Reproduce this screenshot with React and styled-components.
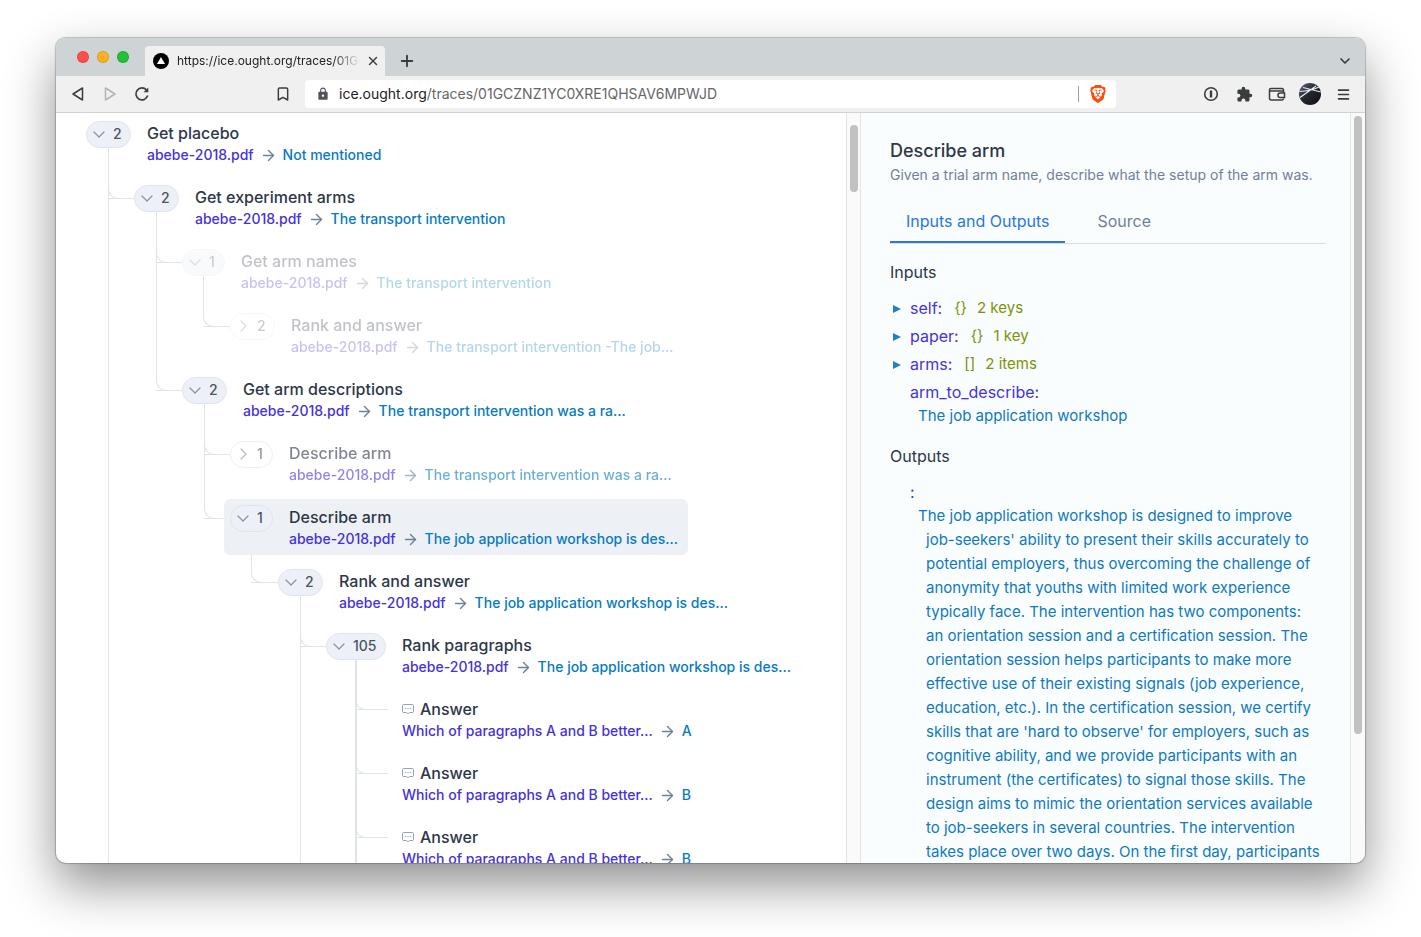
import React from "react";
import styled, { createGlobalStyle, css } from "styled-components";
import { ChevronDown, ArrowRight, X, Plus, Bookmark, Menu } from "lucide-react";
import { SiBrave } from "react-icons/si";
import { MdExtension, MdLock } from "react-icons/md";

const LINE = "#dde4ee";
const FONT = `Inter, "Liberation Sans", sans-serif`;

const GlobalStyle = createGlobalStyle`
  *, *::before, *::after { box-sizing: border-box; }
  body { margin: 0; background: #fff; color: #2d3748; font: 400 16px/24px ${FONT}; }
  button, input { font: inherit; color: inherit; }
  button { display: flex; align-items: center; justify-content: center; padding: 0; border: 0; background: none; cursor: pointer; }
  a { text-decoration: none; color: inherit; }
  ul, dl, dd, h1, h2, p { margin: 0; padding: 0; list-style: none; }
  svg { display: block; flex: none; }
`;

const Desktop = styled.div`
  display: flex;
  height: 100vh;
  padding: 38px 56px 74px;
`;
const Window = styled.div`
  display: flex;
  flex-direction: column;
  flex: 1;
  min-width: 0;
  overflow: hidden;
  border-radius: 10px;
  background: #fff;
  box-shadow: 0 0 1px 1px rgba(0, 0, 0, 0.22), 0 22px 50px rgba(0, 0, 0, 0.44);
`;

/* Browser chrome */
const TabStrip = styled.header`
  display: flex;
  align-items: center;
  height: 38px;
  flex: none;
  padding: 8px 12px 0 21px;
  background: #ced3d6;
`;
const Lights = styled.div`
  display: flex;
  gap: 8px;
  margin: 0 16px 8px 0;
`;
const Light = styled.span`
  width: 12px;
  height: 12px;
  border-radius: 50%;
  background: ${(p) => p.$color};
  border: 1px solid rgba(0, 0, 0, 0.12);
`;
const PageTab = styled.div`
  display: flex;
  align-items: center;
  width: 240px;
  height: 30px;
  padding: 0 5px 0 8px;
  border-radius: 4px 4px 0 0;
  background: #f0f0f0;
  font-size: 12px;
  color: #222;
`;
const PageTabTitle = styled.span`
  flex: 1;
  margin: 0 6px 0 8px;
  overflow: hidden;
  white-space: nowrap;
  mask-image: linear-gradient(to right, #000 85%, transparent);
`;
const ChromeButton = styled.button`
  width: ${(p) => p.$size || 24}px;
  height: ${(p) => p.$height || 24}px;
  color: ${(p) => p.$color || "#3a3d40"};
`;
const Spacer = styled.div`
  flex: 1;
`;
const Toolbar = styled.div`
  display: flex;
  align-items: center;
  height: 37px;
  flex: none;
  padding: 0 10px;
  background: #f0f0f0;
  border-bottom: 1px solid #ced3d6;
`;
const NavButtons = styled.div`
  display: flex;
  gap: 8px;
  width: 205px;
`;
const AddressBar = styled.div`
  display: flex;
  align-items: center;
  flex: 1;
  max-width: 811px;
  height: 28px;
  margin-left: 10px;
  padding: 0 9px 0 11px;
  border-radius: 4px;
  background: #fff;
`;
const Address = styled.a`
  flex: 1;
  margin-left: 9px;
  font-size: 14px;
  color: #666;
  b { font-weight: 400; color: #222; }
`;
const Divider = styled.span`
  width: 1px;
  height: 16px;
  margin-right: 10px;
  background: #a0a0a0;
`;
const Extensions = styled.div`
  display: flex;
  align-items: center;
  gap: 9px;
  margin-left: auto;
`;

/* Page */
const Page = styled.main`
  display: flex;
  flex: 1;
  min-height: 0;
`;
const TreePane = styled.section`
  flex: 1;
  min-width: 0;
  overflow: hidden;
  padding: 2px 0 0 24px;
`;
const Track = styled.div`
  width: 15px;
  flex: none;
  padding: ${(p) => p.$top}px 3px 0;
  background: #fafafa;
  border: solid #e4e4e4;
  border-width: 0 ${(p) => (p.$edge ? 0 : 1)}px 0 1px;
`;
const Thumb = styled.div`
  width: 8px;
  height: ${(p) => p.$size};
  border-radius: 4px;
  background: #c1c1c1;
`;

/* Call tree */
const Children = styled.ul`
  margin-left: ${(p) => p.$inset}px;
`;
const Item = styled.li`
  display: flex;
`;
const Rail = styled.div`
  width: ${(p) => p.$width}px;
  flex: none;
  ${(p) => !p.$last && css`box-shadow: inset ${p.$heavy ? 2 : 1}px 0 ${LINE};`}
`;
const Elbow = styled.div`
  width: ${(p) => p.$width}px;
  height: ${(p) => p.$height}px;
  border-bottom: 1px solid ${LINE};
`;
const Curve = styled.div`
  width: 16px;
  height: calc(100% + 1px);
  border: solid ${LINE};
  border-width: 0 0 1px 1px;
  border-bottom-left-radius: 10px;
`;
const Branch = styled.div`
  min-width: 0;
  padding-top: ${(p) => (p.$root ? 0 : 8)}px;
`;
const Row = styled.div`
  position: relative;
  display: flex;
  width: max-content;
  height: 56px;
  padding: 0 10px 0 6px;
  border-radius: 6px;
  ${(p) => p.$selected && css`background: #edf1f6;`}
`;
const PillColumn = styled.div`
  display: flex;
  flex-direction: column;
  align-items: flex-start;
  padding-top: 6px;
`;
const Pill = styled.button`
  && {
    justify-content: flex-start;
    gap: 8px;
    width: ${(p) => p.$width}px;
    height: 27px;
    padding: 0 6px 1px;
    border: 1px solid #dde4ee;
    border-radius: 14px;
    background: ${(p) => (p.$open ? "#edf1f7" : "transparent")};
    opacity: ${(p) => p.$opacity};
    font-size: 14px;
    font-weight: 500;
    color: #4a5568;
  }
  svg { color: #8292aa; }
`;
const Stem = styled.div`
  flex: 1;
  margin-left: ${(p) => p.$inset}px;
  border-left: ${(p) => (p.$heavy ? 2 : 1)}px solid ${LINE};
`;
const Label = styled.div`
  padding-top: 6px;
  margin-left: ${(p) => (p.$leaf ? 28 : 16)}px;
  opacity: ${(p) => p.$opacity};
  white-space: nowrap;
`;
const Title = styled.div`
  display: flex;
  align-items: center;
  gap: 6px;
  font-weight: 500;
`;
const Summary = styled.div`
  display: flex;
  align-items: center;
  gap: 6px;
  font-size: 14px;
  line-height: 20px;
  font-weight: 500;
  color: #4632da;
  svg { color: #718096; }
`;
const Result = styled.span`
  color: #077bc0;
`;

/* Detail pane */
const Detail = styled.aside`
  width: 489px;
  flex: none;
  overflow: hidden;
  padding: 24px 24px 0 29px;
  background: #f9fdfe;
`;
const DetailTitle = styled.h1`
  font-size: 18px;
  line-height: 28px;
  font-weight: 500;
`;
const Description = styled.p`
  font-size: 14px;
  line-height: 20px;
  color: #718096;
`;
const Tabs = styled.div`
  display: flex;
  gap: 16px;
  height: 43px;
  margin: 16px 0;
  border-bottom: 1px solid #d9dfe4;
`;
const Tab = styled.button`
  && {
    padding: 0 16px;
    border-bottom: 2px solid ${(p) => (p.$active ? "#2b76e0" : "transparent")};
    color: ${(p) => (p.$active ? "#2b76e0" : "#718096")};
  }
`;
const SectionTitle = styled.h2`
  font-size: 16px;
  font-weight: 400;
  margin-bottom: 10px;
`;
const Values = styled.dl`
  padding-left: 3px;
  margin: 0 0 16px;
`;
const Entry = styled.div`
  display: flex;
  flex-wrap: wrap;
  align-items: center;
  min-height: 28px;
  padding-left: ${(p) => (p.$text ? 17 : 0)}px;
`;
const Key = styled.dt`
  width: ${(p) => (p.$block ? "100%" : "auto")};
  line-height: ${(p) => (p.$block ? 28 : 24)}px;
  color: #4632da;
`;
const Count = styled.dd`
  display: flex;
  gap: 10px;
  margin-left: 12px;
  font-size: 15px;
  color: #7f9208;
`;
const Value = styled.dd`
  padding-left: 16px;
  text-indent: -8px;
  margin-top: -2px;
  font-size: 15px;
  color: #1079bd;
  white-space: pre-line;
`;
const Disclosure = styled.button`
  && { width: 8px; padding-top: 2px; margin-right: 9px; color: #1f80c8; }
`;

const PILL_WIDTH = { 1: 43, 2: 45, 105: 60 };
const INDENT = 48;
const PDF = "abebe-2018.pdf";

const answer = (result) => ({ title: "Answer", input: "Which of paragraphs A and B better...", result });

const TREE = {
  title: "Get placebo", input: PDF, result: "Not mentioned", count: 2,
  children: [
    {
      title: "Get experiment arms", input: PDF, result: "The transport intervention", count: 2,
      children: [
        {
          title: "Get arm names", input: PDF, result: "The transport intervention", count: 1, opacity: 0.3,
          children: [
            { title: "Rank and answer", input: PDF, result: "The transport intervention -The job...", count: 2, opacity: 0.3 },
          ],
        },
        {
          title: "Get arm descriptions", input: PDF, result: "The transport intervention was a ra...", count: 2,
          children: [
            { title: "Describe arm", input: PDF, result: "The transport intervention was a ra...", count: 1, opacity: 0.6 },
            {
              title: "Describe arm", input: PDF, result: "The job application workshop is des...", count: 1, selected: true,
              children: [
                {
                  title: "Rank and answer", input: PDF, result: "The job application workshop is des...", count: 2, more: true,
                  children: [
                    {
                      title: "Rank paragraphs", input: PDF, result: "The job application workshop is des...", count: 105, more: true,
                      children: [answer("A"), answer("B"), answer("B")],
                    },
                  ],
                },
              ],
            },
          ],
        },
      ],
    },
  ],
  more: true,
};

const CommentIcon = () => (
  <svg width="12" height="12" viewBox="0 0 12 12" fill="none" stroke="#93a3ba">
    <path d="M1.5 1.5h9a1 1 0 0 1 1 1v6a1 1 0 0 1-1 1H7.500L6 11 4.500 9.500H1.500a1 1 0 0 1-1-1v-6a1 1 0 0 1 1-1z" />
    <path d="M2.800 5.500h1.400M5.300 5.500h1.400M7.800 5.500h1.400" />
  </svg>
);

const PillChevron = ({ open }) => (
  <svg width="12" height="12" viewBox="0 0 12 12" fill="none" stroke="currentColor" strokeWidth="1.200" strokeLinecap="round" strokeLinejoin="round">
    <path d={open ? "M1 4l5 5 5-5" : "M4 1l5 5-5 5"} />
  </svg>
);

function Node({ node, root }) {
  const { title, input, result, count, selected, opacity = 1, children } = node;
  const width = PILL_WIDTH[count];
  const half = Math.floor(width / 2);
  const heavy = count > 100;
  const stemInset = heavy ? half - 1 : half;
  const rail = INDENT - 6 - stemInset;
  return (
    <Branch $root={root}>
      <Row $selected={selected}>
        {count && (
          <PillColumn>
            <Pill $width={width} $open={!!children} $opacity={opacity}>
              <PillChevron open={!!children} />
              {count}
            </Pill>
            {children && !selected && <Stem $inset={stemInset} $heavy={heavy} />}
          </PillColumn>
        )}
        <Label $leaf={!count} $opacity={opacity}>
          <Title>
            {!count && <CommentIcon />}
            {title}
          </Title>
          <Summary>
            {input}
            <ArrowRight size={17} strokeWidth={2} />
            <Result>{result}</Result>
          </Summary>
        </Label>
      </Row>
      {children && (
        <Children $inset={6 + stemInset}>
          {children.map((child, i) => (
            <Item key={i}>
              <Rail $width={rail} $last={!node.more && i === children.length - 1} $heavy={heavy}>
                <Elbow $width={child.count ? rail + 6 : 33} $height={child.count ? 28 : 27}>
                  <Curve />
                </Elbow>
              </Rail>
              <Node node={child} />
            </Item>
          ))}
        </Children>
      )}
    </Branch>
  );
}

const OUTPUT = [
  "The job application workshop is designed to improve",
  "job-seekers' ability to present their skills accurately to",
  "potential employers, thus overcoming the challenge of",
  "anonymity that youths with limited work experience",
  "typically face. The intervention has two components:",
  "an orientation session and a certification session. The",
  "orientation session helps participants to make more",
  "effective use of their existing signals (job experience,",
  "education, etc.). In the certification session, we certify",
  "skills that are 'hard to observe' for employers, such as",
  "cognitive ability, and we provide participants with an",
  "instrument (the certificates) to signal those skills. The",
  "design aims to mimic the orientation services available",
  "to job-seekers in several countries. The intervention",
  "takes place over two days. On the first day, participants",
];

const INPUTS = [
  { name: "self", mark: "{}", size: "2 keys" },
  { name: "paper", mark: "{}", size: "1 key" },
  { name: "arms", mark: "[]", size: "2 items" },
];

const Favicon = () => (
  <svg width="16" height="16" viewBox="0 0 16 16">
    <circle cx="8" cy="8" r="8" fill="#000" />
    <path d="M8 4l4 7H4z" fill="#fff" />
  </svg>
);
const Triangle = ({ back }) => (
  <svg width="14" height="16" viewBox="0 0 14 16" fill="none" stroke="currentColor" strokeWidth="1.5" strokeLinejoin="round">
    <path d={back ? "M11.500 2v12L2 8z" : "M2.500 2v12L12 8z"} />
  </svg>
);
const ReloadIcon = () => (
  <svg width="16" height="16" viewBox="0 0 16 16" fill="none" stroke="currentColor" strokeWidth="1.700">
    <path d="M13.700 9.600A6 6 0 1 1 12.500 4" />
    <path d="M14.300 1.500v4.800H9.500z" fill="currentColor" stroke="none" />
  </svg>
);
const PasswordIcon = () => (
  <svg width="16" height="16" viewBox="0 0 16 16" fill="none" stroke="currentColor">
    <circle cx="8" cy="8" r="6.300" strokeWidth="1.600" />
    <path d="M8 4.500v7" strokeWidth="2.400" />
  </svg>
);
const WalletIcon = () => (
  <svg width="18" height="16" viewBox="0 0 18 16" fill="none" stroke="currentColor" strokeWidth="1.500">
    <path d="M15.500 5V4a1.500 1.500 0 0 0-1.500-1.500H3A1.500 1.500 0 0 0 1.500 4v8.500A1.500 1.500 0 0 0 3 14h11a1.500 1.500 0 0 0 1.500-1.500M1.500 5h14v2" />
    <path d="M16.500 7h-4.300a2 2 0 0 0 0 4.500h4.300z" />
  </svg>
);
const Avatar = () => (
  <svg width="22" height="22" viewBox="0 0 22 22">
    <defs>
      <linearGradient id="sky" x1="0" y1="0" x2="1" y2="1">
        <stop offset="0" stopColor="#5a6078" />
        <stop offset="0.500" stopColor="#23262d" />
        <stop offset="1" stopColor="#0c0d10" />
      </linearGradient>
      <clipPath id="disc"><circle cx="11" cy="11" r="11" /></clipPath>
    </defs>
    <g clipPath="url(#disc)">
      <rect width="22" height="22" fill="url(#sky)" />
      <path d="M1 14.500L17 3M4 4.500l18 4.500M0 8.500Q12 8 20 4" stroke="#e8ebef" strokeWidth="1.200" fill="none" />
    </g>
  </svg>
);

export default function App() {
  return (
    <Desktop>
      <GlobalStyle />
      <Window>
        <TabStrip>
          <Lights>
            <Light $color="#fe4f4a" />
            <Light $color="#fdb022" />
            <Light $color="#22c138" />
          </Lights>
          <PageTab>
            <Favicon />
            <PageTabTitle>https://ice.ought.org/traces/01GCZNZ1YC0</PageTabTitle>
            <ChromeButton $size={14} aria-label="Close tab"><X size={14} strokeWidth={2.5} /></ChromeButton>
          </PageTab>
          <ChromeButton $size={44} aria-label="New tab"><Plus size={18} strokeWidth={2.5} /></ChromeButton>
          <Spacer />
          <ChromeButton $size={16} aria-label="Search tabs"><ChevronDown size={16} strokeWidth={2.5} /></ChromeButton>
        </TabStrip>
        <Toolbar>
          <NavButtons>
            <ChromeButton aria-label="Back"><Triangle back /></ChromeButton>
            <ChromeButton aria-label="Forward" $color="#b4b4b4"><Triangle /></ChromeButton>
            <ChromeButton aria-label="Reload"><ReloadIcon /></ChromeButton>
          </NavButtons>
          <ChromeButton aria-label="Bookmark"><Bookmark size={16} strokeWidth={2.200} /></ChromeButton>
          <AddressBar>
            <MdLock size={14} color="#50535a" />
            <Address href="#"><b>ice.ought.org</b>/traces/01GCZNZ1YC0XRE1QHSAV6MPWJD</Address>
            <Divider />
            <SiBrave size={18} color="#fb4a0b" />
          </AddressBar>
          <Extensions>
            <ChromeButton aria-label="Passwords"><PasswordIcon /></ChromeButton>
            <ChromeButton aria-label="Extensions"><MdExtension size={17} /></ChromeButton>
            <ChromeButton aria-label="Wallet"><WalletIcon /></ChromeButton>
            <ChromeButton aria-label="Profile"><Avatar /></ChromeButton>
            <ChromeButton aria-label="Menu"><Menu size={15} strokeWidth={2.500} /></ChromeButton>
          </Extensions>
        </Toolbar>
        <Page>
          <TreePane><Node node={TREE} root /></TreePane>
          <Track $top={12}><Thumb $size="67px" /></Track>
          <Detail>
            <DetailTitle>Describe arm</DetailTitle>
            <Description>Given a trial arm name, describe what the setup of the arm was.</Description>
            <Tabs role="tablist">
              <Tab role="tab" $active>Inputs and Outputs</Tab>
              <Tab role="tab">Source</Tab>
            </Tabs>
            <SectionTitle>Inputs</SectionTitle>
            <Values>
              {INPUTS.map((v) => (
                <Entry key={v.name}>
                  <Disclosure aria-label={`Expand ${v.name}`}>
                    <svg width="8" height="8" viewBox="0 0 8 8"><path d="M0 0l8 4-8 4z" fill="currentColor" /></svg>
                  </Disclosure>
                  <Key>{v.name}:</Key>
                  <Count><span>{v.mark}</span><span>{v.size}</span></Count>
                </Entry>
              ))}
              <Entry $text>
                <Key $block>arm_to_describe:</Key>
                <Value>The job application workshop</Value>
              </Entry>
            </Values>
            <SectionTitle>Outputs</SectionTitle>
            <Values>
              <Entry $text>
                <Key $block>:</Key>
                <Value>
                  {OUTPUT.map((line, i) => (
                    <React.Fragment key={i}>{i > 0 && <br />}{line}</React.Fragment>
                  ))}
                </Value>
              </Entry>
            </Values>
          </Detail>
          <Track $top={3} $edge><Thumb $size="618px" /></Track>
        </Page>
      </Window>
    </Desktop>
  );
}
